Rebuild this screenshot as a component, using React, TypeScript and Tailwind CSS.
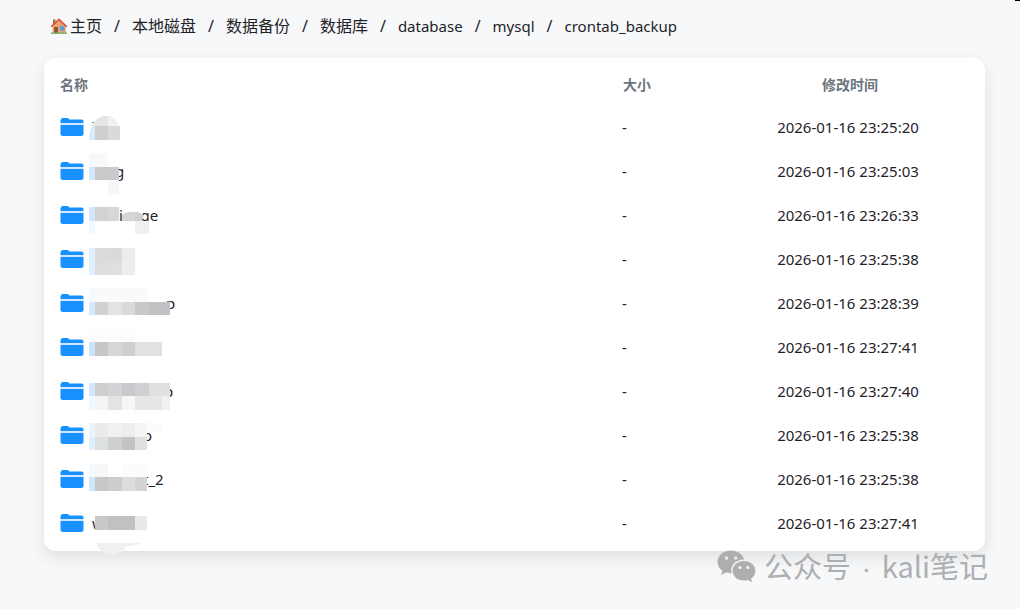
import React from 'react';

type Tile = [x: number, y: number, w: number, h: number, color: string];

interface FolderRow {
  time: string;
  text?: string;
  indent?: string;
  tiles: Tile[];
  shapes?: { d: string; color: string }[];
}

const crumbs = ['本地磁盘', '数据备份', '数据库', 'database', 'mysql', 'crontab_backup'];

// tiles are relative to the top left corner of the name
const folders: FolderRow[] = [
  {
    time: '2026-01-16 23:25:20',
    tiles: [[6, 20, 13, 14, '#cfcfd0'], [19, 20, 12, 14, '#d9dadb']],
    shapes: [
      { d: 'M3 16h5v1H3z', color: '#8b9094' },
      { d: 'M0 34q0-8 3-14h3v14z', color: '#dcecfa' },
      { d: 'M3 20q4-10 14-10h2v10z', color: '#e4e6e5' },
      { d: 'M19 10q8 1 11 10H19z', color: '#f0f2f1' },
    ],
  },
  {
    time: '2026-01-16 23:25:03',
    text: 'g',
    indent: 'pl-[26px]',
    tiles: [
      [0, 3, 6, 14, '#f6f8fe'], [6, 3, 13, 14, '#f8faf9'],
      [0, 17, 6, 13, '#d2e7f9'], [6, 17, 24, 13, '#c9cacb'], [19, 30, 11, 14, '#f7f7f7'],
    ],
  },
  {
    time: '2026-01-16 23:26:33',
    text: 'iange',
    indent: 'pl-[30px]',
    tiles: [
      [0, 13, 6, 14, '#d2e7fb'], [6, 13, 13, 14, '#d1d3d2'], [19, 13, 11, 14, '#d7d9d8'],
      [0, 27, 6, 13, '#f2faff'], [46, 27, 14, 13, '#eff1f0'],
    ],
    shapes: [
      { d: 'M33 21q11-7 22 0l-2 6H33z', color: '#d5d5d7' },
      { d: 'M46 18q6 2 8 9H46z', color: '#cfd0d2' },
    ],
  },
  {
    time: '2026-01-16 23:25:38',
    tiles: [
      [0, 10, 6, 27, '#e1f0fe'], [6, 10, 11, 13, '#dadcde'], [17, 10, 16, 13, '#d9dbda'], [33, 10, 13, 13, '#ececec'],
      [6, 23, 11, 14, '#dddddf'], [17, 23, 16, 14, '#dfdfdf'], [33, 23, 13, 14, '#eceeed'],
    ],
  },
  {
    time: '2026-01-16 23:28:39',
    text: 'p',
    indent: 'pl-[77px]',
    tiles: [
      [0, 6, 6, 14, '#f2faff'], [6, 6, 53, 14, '#fafafa'],
      [0, 20, 6, 13, '#d6eafc'], [6, 20, 13, 13, '#d1d1d3'], [19, 20, 14, 13, '#e2e4e3'],
      [33, 20, 13, 13, '#d8dadb'], [46, 20, 14, 13, '#c7c8ca'], [60, 20, 21, 13, '#c1c2c4'],
    ],
  },
  {
    time: '2026-01-16 23:27:41',
    tiles: [
      [0, 3, 46, 13, '#fcfcfc'],
      [0, 16, 6, 14, '#cbe4f9'], [6, 16, 13, 14, '#c5c7c8'], [19, 16, 14, 14, '#d7d7d9'],
      [33, 16, 13, 14, '#cfcfd1'], [46, 16, 14, 14, '#e0e2e1'], [60, 16, 13, 14, '#e1e1e1'],
    ],
  },
  {
    time: '2026-01-16 23:27:40',
    text: 'p',
    indent: 'pl-[75px]',
    tiles: [
      [0, 13, 6, 13, '#d3e8fb'], [6, 13, 13, 13, '#cdced0'], [19, 13, 14, 13, '#d2d3d5'],
      [33, 13, 13, 13, '#c8c9cc'], [46, 13, 14, 13, '#cfd0d2'], [60, 13, 21, 13, '#dfe1e0'],
      [0, 26, 6, 14, '#f0f8ff'], [6, 26, 13, 14, '#f4f4f4'], [19, 26, 14, 14, '#e2e3e5'],
      [33, 26, 13, 14, '#f5f6f6'], [46, 26, 27, 14, '#e5e6e8'], [73, 26, 8, 14, '#f1f1f1'],
    ],
  },
  {
    time: '2026-01-16 23:25:38',
    text: 'o',
    indent: 'pl-[54px]',
    tiles: [
      [0, 9, 6, 14, '#e8f4fe'], [6, 9, 13, 14, '#ebebeb'], [19, 9, 14, 14, '#eff1f0'],
      [33, 9, 13, 14, '#ededed'], [46, 9, 12, 14, '#f5f5f5'], [58, 9, 15, 10, '#fcfcfc'],
      [0, 23, 6, 13, '#deeefe'], [6, 23, 13, 13, '#dce0de'], [19, 23, 14, 13, '#cfcfd1'],
      [33, 23, 13, 13, '#c2c3c5'], [46, 23, 12, 13, '#dfe1e0'],
    ],
  },
  {
    time: '2026-01-16 23:25:38',
    text: 't_2',
    indent: 'pl-[54px]',
    tiles: [
      [0, 6, 6, 13, '#f5faff'], [6, 6, 13, 13, '#f5f8f6'], [33, 6, 25, 13, '#fcfcfc'],
      [0, 19, 6, 14, '#d0e6f9'], [6, 19, 13, 14, '#c8c8ca'], [19, 19, 14, 14, '#cdcdcf'],
      [33, 19, 13, 14, '#dcdddf'], [46, 19, 12, 14, '#d2d4d3'],
    ],
  },
  {
    time: '2026-01-16 23:27:41',
    text: 'w',
    indent: 'pl-[3px]',
    tiles: [[6, 14, 13, 14, '#c8c9cb'], [19, 14, 27, 14, '#c0c1c3'], [46, 14, 12, 14, '#e9e9e9']],
    shapes: [{ d: 'M7 41h45q-4 3-15 3-4 9-15 9-10 0-15-12z', color: '#f0f0f0' }],
  },
];

function HouseIcon() {
  return (
    <svg viewBox="0 0 18 18" className="w-[18px] h-[18px]" aria-hidden="true">
      <path d="M3 2.5h2.5v5H3z" fill="#a9644a" />
      <path d="M2.5 8.5 9 3l6.5 5.5V16h-13z" fill="#e8a67c" />
      <path d="M9 3l6.5 5.5V16H9z" fill="#dfa07a" />
      <path d="M.5 9.2 9 1.2l8.5 8-1.3 1L9 3.8l-7.2 6.4z" fill="#e0593c" />
      <path d="M4 10h4v6H4z" fill="#8b5a3c" />
      <path d="M10.2 9.5h4v4h-4z" fill="#4a9fe0" />
      <path d="M1 15.5h16V17H1z" fill="#78b96a" />
    </svg>
  );
}

function FolderIcon() {
  return (
    <svg viewBox="0 0 24 24" className="w-6 h-6" aria-hidden="true">
      <path d="M.5 7V4.500q0-2 2-2.500h5.200l2 1.500H21.500q2 0 2 2V7z" fill="#1890ff" />
      <path d="M.5 7h23v2H.5z" fill="#d3e9ff" />
      <path d="M.5 9h23v8.500q0 2.500-2.500 2.500H3Q.5 20 .5 17.500z" fill="#1890ff" />
    </svg>
  );
}

function WechatIcon() {
  return (
    <svg viewBox="0 0 39 33" className="w-[39px] h-[33px]" fill="currentColor" aria-hidden="true">
      <path
        fillRule="evenodd"
        d="M14 .5C6.300.5.500 5.500.500 12c0 3.600 1.900 6.600 5 8.800L4.200 25l4.800-2.500c1.900.6 3.500.8 5.800.8-2.300-7 3.500-14 12.300-13.800C25.800 4.200 20.500.5 14 .5zM9.500 6.300a1.700 1.700 0 1 1 0 3.400 1.700 1.700 0 0 1 0-3.400zm9.200 0a1.700 1.700 0 1 1 0 3.400 1.700 1.700 0 0 1 0-3.400z"
      />
      <path
        fillRule="evenodd"
        d="M27 11c-6.600 0-11.400 4.400-11.400 9.800 0 5.500 4.800 9.800 11.400 9.800 1.500 0 2.900-.2 4.200-.6l4 2.200-1.100-3.600c2.700-1.900 4.300-4.500 4.300-7.800C38.400 15.400 33.500 11 27 11zm-4 5a1.500 1.500 0 1 1 0 3 1.500 1.500 0 0 1 0-3zm7.800 0a1.500 1.500 0 1 1 0 3 1.500 1.500 0 0 1 0-3z"
      />
    </svg>
  );
}

function FolderName({ folder }: { folder: FolderRow }) {
  return (
    <span className="relative block h-11 w-24 leading-[42px]">
      {folder.text && <span className={folder.indent}>{folder.text}</span>}
      <svg className="absolute left-0 top-0 w-24 h-11 overflow-visible" viewBox="0 0 96 44" shapeRendering="crispEdges" aria-hidden="true">
        {folder.tiles.map(([x, y, w, h, color], i) => (
          <rect key={i} x={x} y={y} width={w} height={h} fill={color} />
        ))}
        {folder.shapes?.map((shape, i) => (
          <path key={i} d={shape.d} fill={shape.color} />
        ))}
      </svg>
    </span>
  );
}

export default function App() {
  return (
    <div className="relative min-h-screen bg-[#f6f8fa] pt-3 pb-14 pl-11 pr-[35px] text-[#1f2328] font-['Noto_Sans','Noto_Sans_CJK_SC',sans-serif]">
      <span className="absolute right-0 top-0 w-[5px] h-px bg-black" />

      <nav className="flex items-center h-7 pl-1.5 mb-[18px] text-base">
        <a href="#home" className="flex items-center gap-0.5">
          <HouseIcon />
          主页
        </a>
        {crumbs.map((crumb) => (
          <React.Fragment key={crumb}>
            <span className="px-3">/</span>
            <a href={`#${crumb}`} className={/^[a-z]/.test(crumb) ? 'text-[15px]' : 'text-base'}>
              {crumb}
            </a>
          </React.Fragment>
        ))}
      </nav>

      <div className="bg-white rounded-xl py-[5px] shadow-[0_6px_16px_rgba(0,0,0,0.1)]">
        <table className="w-full table-fixed text-[15px]">
          <thead>
            <tr className="h-[43px] text-sm text-[#6c757d]">
              <th className="px-4 text-left font-bold">名称</th>
              <th className="w-[108px] px-4 text-left font-bold">大小</th>
              <th className="w-[270px] text-center font-bold">修改时间</th>
            </tr>
          </thead>
          <tbody>
            {folders.map((folder, index) => (
              <tr key={index} className="h-11">
                <td className="pl-4">
                  <a href={`#folder-${index + 1}`} className="flex items-center gap-[5px]">
                    <FolderIcon />
                    <FolderName folder={folder} />
                  </a>
                </td>
                <td className="pl-[15px] pb-0.5">-</td>
                <td className="pr-1 pb-0.5 text-center">{folder.time}</td>
              </tr>
            ))}
          </tbody>
        </table>
      </div>

      <div className="absolute right-8 bottom-5 flex items-center gap-2 text-[29px] leading-[42px] text-[#adaeb0] font-['Noto_Sans_CJK_SC',sans-serif]">
        <WechatIcon />
        <span>
          公众号 <span className="mx-1 font-['Liberation_Sans',sans-serif]">·</span> kali笔记
        </span>
      </div>
    </div>
  );
}
